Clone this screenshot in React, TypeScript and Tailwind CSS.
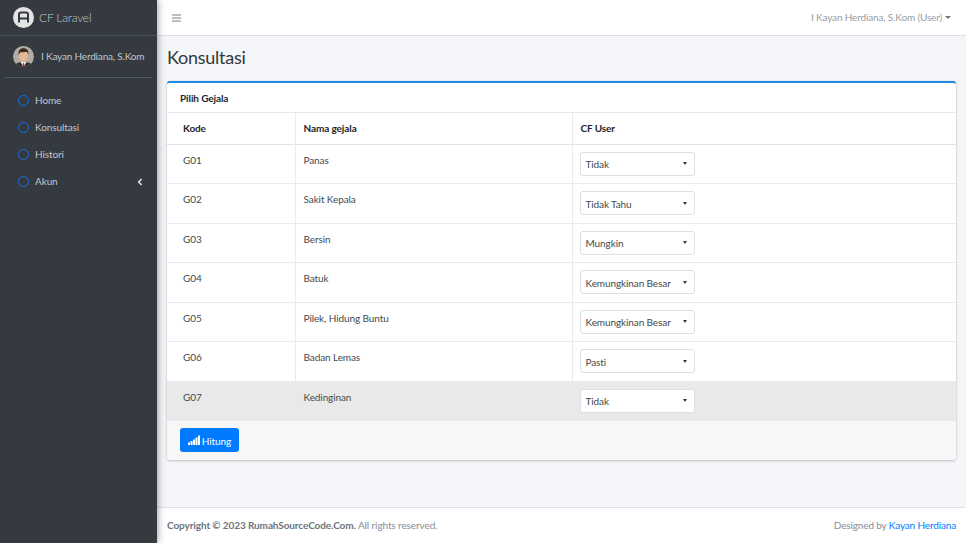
const rows: [string, string, string, boolean?][] = [
  ["G01", "Panas", "Tidak"],
  ["G02", "Sakit Kepala", "Tidak Tahu"],
  ["G03", "Bersin", "Mungkin"],
  ["G04", "Batuk", "Kemungkinan Besar"],
  ["G05", "Pilek, Hidung Buntu", "Kemungkinan Besar"],
  ["G06", "Badan Lemas", "Pasti"],
  ["G07", "Kedinginan", "Tidak", true],
];
const heights = ["h-[39px]", "h-[40px]", "h-[39px]", "h-[40px]", "h-[39px]", "h-[40px]", "h-[39px]"];

function Avatar() {
  return (
    <svg width="21" height="21" viewBox="0 0 21 21" className="shrink-0">
      <defs>
        <clipPath id="av"><circle cx="10.5" cy="10.5" r="10.5" /></clipPath>
      </defs>
      <g clipPath="url(#av)">
        <rect width="21" height="21" fill="#b3aca4" />
        <path d="M1 21c1-4 5-5 9.500-5s8.500 1 9.500 5z" fill="#33302f" />
        <path d="M7.500 16h6l-3 5z" fill="#f5f2ee" />
        <path d="M10 17h1l.5 4h-2z" fill="#a83232" />
        <ellipse cx="10.500" cy="10" rx="4.600" ry="5.800" fill="#e8b596" />
        <path d="M5.600 9C5 3.500 8 2.200 10.500 2.200S16 3.500 15.400 9c-.4-2-1.200-3-2-3.300-2 .6-4 .6-5.500.2C7 6.300 6 7.500 5.600 9z" fill="#3c2a21" />
      </g>
    </svg>
  );
}

function NavItem({ label, arrow }: { label: string; arrow?: boolean }) {
  return (
    <div className="flex items-center h-[27px] pl-[18px] pr-[14px]">
      <span className="w-[11px] h-[11px] rounded-full border-[1.75px] border-[#1a6ee0] mr-[6px] shrink-0" />
      <span className="text-[#c2c7d0]">{label}</span>
      {arrow && (
        <svg width="6" height="8" viewBox="0 0 6 8" className="ml-auto">
          <path d="M4.700 1 1.700 4l3 3" fill="none" stroke="#d8dbe0" strokeWidth="1.700" />
        </svg>
      )}
    </div>
  );
}

export default function App() {
  return (
    <div className="flex w-[966px] h-[543px] overflow-hidden bg-[#f4f6f9] text-[#212529] text-[10px] tracking-[-0.1px] font-['Lato','Noto_Sans',sans-serif]">
      <aside className="w-[157px] shrink-0 bg-[#343a40] shadow-[0_0_8px_rgba(0,0,0,0.45)] z-10 flex flex-col">
        <div className="h-[36px] flex items-center pl-[13px] border-b border-[#4b545c]">
          <div className="w-[21px] h-[21px] rounded-full bg-[#e4e4e4] flex items-center justify-center shrink-0">
            <svg width="13" height="13" viewBox="0 0 13 13">
              <path d="M2 11.500V3.500Q2 1.500 4 1.500h5q2 0 2 2v8" fill="none" stroke="#343a40" strokeWidth="2" />
              <path d="M2.500 7.500h8" stroke="#343a40" strokeWidth="2" />
            </svg>
          </div>
          <span className="ml-[5px] text-[12px] tracking-[-0.2px] text-[#c2c7d0] font-light">CF Laravel</span>
        </div>
        <div className="mx-[5px] h-[42px] pl-[8px] flex items-center border-b border-[#4f5962]">
          <Avatar />
          <span className="ml-[7px] tracking-[-0.18px] text-[#c2c7d0] whitespace-nowrap">I Kayan Herdiana, S.Kom</span>
        </div>
        <nav className="pt-[9px]">
          <NavItem label="Home" />
          <NavItem label="Konsultasi" />
          <NavItem label="Histori" />
          <NavItem label="Akun" arrow />
        </nav>
      </aside>

      <div className="flex-1 flex flex-col min-w-0">
        <header className="h-[36px] shrink-0 bg-white border-b border-[#dee2e6] flex items-center justify-between pl-[15px] pr-[15px]">
          <svg width="9" height="8" viewBox="0 0 9 8">
            <path d="M0 1h9M0 4h9M0 7h9" stroke="#7b7f84" strokeWidth="1" />
          </svg>
          <div className="flex items-center text-[#9a9da1] tracking-[-0.15px]">
            <span>I Kayan Herdiana, S.Kom (User)</span>
            <span className="ml-[3px] w-0 h-0 border-x-[3px] border-x-transparent border-t-[3px] border-t-[#6c757d]" />
          </div>
        </header>

        <main className="flex-1 px-[10px] min-h-0">
          <h1 className="h-[43px] flex items-center text-[18px] tracking-[-0.25px] text-[#33383d] font-normal">Konsultasi</h1>
          <section className="mt-[2px] bg-white rounded-[3px] border-t-2 border-[#1e88e5] shadow-[0_0_1px_rgba(0,0,0,0.25),0_1px_3px_rgba(0,0,0,0.2)] overflow-hidden">
            <div className="h-[30px] flex items-center px-[13px] pt-[1px] font-bold text-[#212529] border-b border-[#e6e8eb]">Pilih Gejala</div>
            <table className="w-full table-fixed border-collapse">
              <colgroup>
                <col className="w-[128px]" />
                <col className="w-[277px]" />
                <col />
              </colgroup>
              <thead>
                <tr className="h-[31px] border-b-[1.500px] border-[#dee2e6] text-left">
                  <th className="px-[16px] pt-[1px] font-bold">Kode</th>
                  <th className="px-[8px] pt-[1px] font-bold border-l border-[#e9ecef]">Nama gejala</th>
                  <th className="px-[8px] pt-[1px] font-bold border-l border-[#e9ecef]">CF User</th>
                </tr>
              </thead>
              <tbody>
                {rows.map(([kode, nama, cf, hover], i) => (
                  <tr key={kode} className={`${heights[i]} border-b border-[#e9ecef] ${hover ? "bg-[#e9e9e9]" : ""}`}>
                    <td className="px-[16px] pt-[8px] align-top text-[#43494e]">{kode}</td>
                    <td className="px-[8px] pt-[8px] align-top text-[#43494e] border-l border-[#e9ecef]">{nama}</td>
                    <td className="px-[7px] align-middle border-l border-[#e9ecef]">
                      <div className="w-[115px] h-[24px] bg-white border border-[#dcdfe3] rounded-[3px] flex items-center pl-[5px] pr-[7px] text-[#43494e] whitespace-nowrap">
                        <span className="pt-[2px]">{cf}</span>
                        <span className="ml-auto w-0 h-0 border-x-[2.5px] border-x-transparent border-t-[3px] border-t-[#343a40]" />
                      </div>
                    </td>
                  </tr>
                ))}
              </tbody>
            </table>
            <div className="h-[39px] bg-[#f7f7f7] flex items-center px-[13px]">
              <button className="h-[24px] w-[59px] bg-[#007bff] rounded-[3px] text-white flex items-center justify-center">
                <svg width="12" height="10" viewBox="0 0 12 10" className="mr-[2px]">
                  <path d="M0 7.500h2V10H0zM2.500 6h2v4h-2zM5 4.500h2V10H5zM7.500 2.500h2V10h-2zM10 .5h2V10h-2z" fill="#fff" />
                </svg>
                <span className="pt-[2px]">Hitung</span>
              </button>
            </div>
          </section>
        </main>

        <footer className="h-[36px] shrink-0 bg-white border-t border-[#dee2e6] flex items-center justify-between px-[10px] text-[#868e96]">
          <span><b className="font-bold text-[#6c757d]">Copyright © 2023 RumahSourceCode.Com.</b> All rights reserved.</span>
          <span className="tracking-[-0.15px]">Designed by <span className="text-[#007bff]">Kayan Herdiana</span></span>
        </footer>
      </div>
    </div>
  );
}
